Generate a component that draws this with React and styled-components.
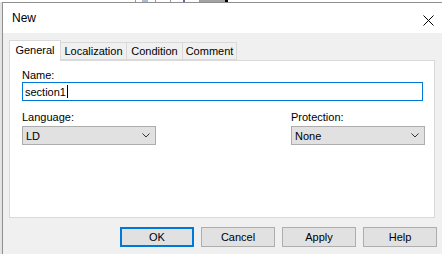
import React from "react"
import styled, { createGlobalStyle } from "styled-components"

const GlobalStyle = createGlobalStyle`
  html, body {
    margin: 0;
    padding: 0;
    background: #ffffff;
  }
  body {
    width: 442px;
    height: 254px;
    overflow: hidden;
    font-family: "Liberation Sans", Arial, sans-serif;
  }
`

const Page = styled.div`
  width: 442px;
  height: 254px;
  display: flex;
  flex-direction: column;
  overflow: hidden;
  background: #ffffff;
`

const DesktopStrip = styled.div`
  height: 2px;
  display: flex;
  flex-shrink: 0;
`

const DesktopPiece = styled.span`
  width: ${(p) => p.$w}px;
  height: 2px;
  background: ${(p) => p.$c || "transparent"};
  flex-shrink: 0;
`

const DialogRow = styled.div`
  display: flex;
  flex: 1;
`

const DesktopEdge = styled.div`
  width: 2px;
  background: #e3e3e3;
  flex-shrink: 0;
`

const Dialog = styled.div`
  flex: 1;
  display: flex;
  flex-direction: column;
  border-top: 1px solid #8f8f8f;
  border-left: 1px solid #8f8f8f;
  background: #f0f0f0;
`

const TitleBar = styled.div`
  height: 30px;
  display: flex;
  align-items: center;
  justify-content: space-between;
  padding: 0 8px 0 9px;
  background: #ffffff;
  font-size: 12px;
  color: #000;
`

const CloseGlyph = styled.svg`
  width: 11px;
  height: 11px;
  margin-top: 4px;
`

const Body = styled.div`
  flex: 1;
  padding: 7px 5px 0 6px;
  display: flex;
  flex-direction: column;
`

const TabStrip = styled.div`
  display: flex;
  align-items: flex-end;
  height: 20px;
  position: relative;
  z-index: 1;
`

const Tab = styled.div`
  width: ${(p) => p.$w}px;
  height: ${(p) => (p.$active ? 21 : 18)}px;
  margin-bottom: ${(p) => (p.$active ? -1 : 0)}px;
  margin-left: ${(p) => (p.$first ? 0 : -1)}px;
  box-sizing: border-box;
  border: 1px solid #d9d9d9;
  border-bottom: ${(p) => (p.$active ? "none" : "1px solid #d9d9d9")};
  background: ${(p) => (p.$active ? "#ffffff" : "#f0f0f0")};
  display: flex;
  align-items: center;
  justify-content: center;
  padding-bottom: ${(p) => (p.$active ? 2 : 0)}px;
  font-size: 11px;
  color: #000;
  position: relative;
  z-index: ${(p) => (p.$active ? 2 : 1)};
`

const Panel = styled.div`
  width: 426px;
  height: 158px;
  box-sizing: border-box;
  background: #ffffff;
  border: 1px solid #d9d9d9;
  padding: 8px 9px 0 12px;
  display: flex;
  flex-direction: column;
`

const Label = styled.div`
  font-size: 11px;
  line-height: 13px;
  color: #000;
`

const TextInput = styled.div`
  height: 19px;
  width: 401px;
  box-sizing: border-box;
  border: 1px solid #0078d7;
  display: flex;
  align-items: center;
  padding-left: 2px;
  font-size: 11px;
  color: #000;
`

const Caret = styled.span`
  width: 1px;
  height: 13px;
  background: #000;
  margin-left: 1px;
`

const FieldRow = styled.div`
  display: flex;
  justify-content: space-between;
  margin-top: 10px;
`

const Field = styled.div`
  display: flex;
  flex-direction: column;
  gap: 2px;
`

const Combo = styled.div`
  width: 134px;
  height: 19px;
  box-sizing: border-box;
  background: #e1e1e1;
  border: 1px solid #adadad;
  display: flex;
  align-items: center;
  justify-content: space-between;
  padding: 0 5px 0 3px;
  font-size: 11px;
  color: #000;
`

const Chevron = styled.svg`
  width: 8px;
  height: 5px;
`

const ButtonRow = styled.div`
  display: flex;
  justify-content: flex-end;
  gap: 7px;
  margin-top: 9px;
  padding-right: 0;
`

const Button = styled.div`
  width: 74px;
  height: 20px;
  box-sizing: border-box;
  background: #e1e1e1;
  border: ${(p) => (p.$default ? "2px solid #0078d7" : "1px solid #adadad")};
  display: flex;
  align-items: center;
  justify-content: center;
  font-size: 11px;
  color: #000;
`

const tabs = [
  { label: "General", w: 52, active: true },
  { label: "Localization", w: 67 },
  { label: "Condition", w: 57 },
  { label: "Comment", w: 55 },
]

const desktop = [
  { w: 135 },
  { w: 1, c: "#9a9a9a" },
  { w: 6 },
  { w: 6, c: "#a9bcd6" },
  { w: 7 },
  { w: 1, c: "#9a9a9a" },
  { w: 14 },
  { w: 1, c: "#9a9a9a" },
  { w: 12 },
  { w: 2, c: "#7a5a9a" },
  { w: 14 },
  { w: 1, c: "#9a9a9a" },
  { w: 25, c: "#a3a3a3" },
  { w: 3, c: "#000000" },
]

function ComboBox({ value }) {
  return (
    <Combo>
      <span>{value}</span>
      <Chevron viewBox="0 0 8 5">
        <polyline points="0.5,0.5 4,4 7.5,0.5" fill="none" stroke="#333" strokeWidth="1" />
      </Chevron>
    </Combo>
  )
}

export default function App() {
  return (
    <>
      <GlobalStyle />
      <Page>
        <DesktopStrip>
          {desktop.map((d, i) => (
            <DesktopPiece key={i} $w={d.w} $c={d.c} />
          ))}
        </DesktopStrip>
        <DialogRow>
          <DesktopEdge />
          <Dialog>
            <TitleBar>
              <span>New</span>
              <CloseGlyph viewBox="0 0 11 11">
                <path d="M0.5 0.5 L10.5 10.5 M10.5 0.5 L0.5 10.5" stroke="#000" strokeWidth="1" fill="none" />
              </CloseGlyph>
            </TitleBar>
            <Body>
              <TabStrip>
                {tabs.map((t, i) => (
                  <Tab key={t.label} $w={t.w} $active={t.active} $first={i === 0}>
                    {t.label}
                  </Tab>
                ))}
              </TabStrip>
              <Panel>
                <Label>Name:</Label>
                <TextInput>
                  section1
                  <Caret />
                </TextInput>
                <FieldRow>
                  <Field>
                    <Label>Language:</Label>
                    <ComboBox value="LD" />
                  </Field>
                  <Field>
                    <Label>Protection:</Label>
                    <ComboBox value="None" />
                  </Field>
                </FieldRow>
              </Panel>
              <ButtonRow>
                <Button $default>OK</Button>
                <Button>Cancel</Button>
                <Button>Apply</Button>
                <Button>Help</Button>
              </ButtonRow>
            </Body>
          </Dialog>
        </DialogRow>
      </Page>
    </>
  )
}
